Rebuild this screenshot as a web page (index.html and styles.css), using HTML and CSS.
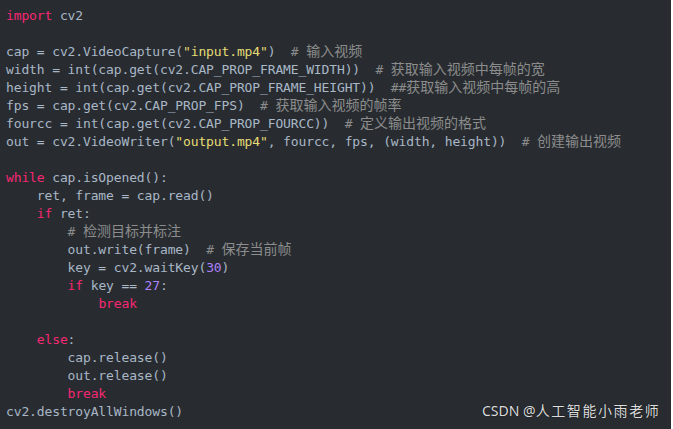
FILE: index.html
```html
<!DOCTYPE html>
<html>
<head>
<meta charset="utf-8">
<link rel="stylesheet" href="styles.css">
</head>
<body>
<div class="block">
<pre class="code"><span class="kw">import</span> cv2

cap = cv2.VideoCapture(<span class="str">"input.mp4"</span>)  <span class="cm"># <span class="cjk">输入视频</span></span>
width = int(cap.get(cv2.CAP_PROP_FRAME_WIDTH))  <span class="cm"># <span class="cjk">获取输入视频中每帧的宽</span></span>
height = int(cap.get(cv2.CAP_PROP_FRAME_HEIGHT))  <span class="cm">##<span class="cjk">获取输入视频中每帧的高</span></span>
fps = cap.get(cv2.CAP_PROP_FPS)  <span class="cm"># <span class="cjk">获取输入视频的帧率</span></span>
fourcc = int(cap.get(cv2.CAP_PROP_FOURCC))  <span class="cm"># <span class="cjk">定义输出视频的格式</span></span>
out = cv2.VideoWriter(<span class="str">"output.mp4"</span>, fourcc, fps, (width, height))  <span class="cm"># <span class="cjk">创建输出视频</span></span>

<span class="kw">while</span> cap.isOpened():
    ret, frame = cap.read()
    <span class="kw">if</span> ret:
        <span class="cm"># <span class="cjk">检测目标并标注</span></span>
        out.write(frame)  <span class="cm"># <span class="cjk">保存当前帧</span></span>
        key = cv2.waitKey(<span class="num">30</span>)
        <span class="kw">if</span> key == <span class="num">27</span>:
            <span class="kw">break</span>

    <span class="kw">else</span>:
        cap.release()
        out.release()
        <span class="kw">break</span>
cv2.destroyAllWindows()</pre>
<div class="mark">CSDN @<span class="mcjk">人工智能小雨老师</span></div>
</div>
</body>
</html>
```

FILE: styles.css
```css
html, body {
  margin: 0;
  padding: 0;
  background: #ffffff;
}
.block {
  position: relative;
  width: 671px;
  height: 429px;
  background: #282c31;
  overflow: hidden;
}
.code {
  margin: 0;
  padding: 7px 0 0 6px;
  font-family: "DejaVu Sans Mono", monospace;
  font-size: 13px;
  letter-spacing: -0.13px;
  line-height: 18px;
  color: #a9b7c6;
  white-space: pre;
}
.kw { color: #f92672; }
.str { color: #e6db74; }
.num { color: #ae81ff; }
.cm { color: #8c8c8c; }
.cjk {
  font-family: "Noto Sans CJK SC", sans-serif;
  font-size: 14px;
  letter-spacing: 0;
  line-height: 0;
}
.mark {
  position: absolute;
  left: 482px;
  top: 401px;
  font-family: "Noto Sans", "Noto Sans CJK SC", sans-serif;
  font-size: 14px;
  line-height: 20px;
  color: #dcdcdc;
  white-space: nowrap;
  text-shadow: 0 0 1px #000;
}
.mcjk {
  font-family: "Noto Sans CJK SC", sans-serif;
  letter-spacing: 1.6px;
  line-height: 0;
}
```
